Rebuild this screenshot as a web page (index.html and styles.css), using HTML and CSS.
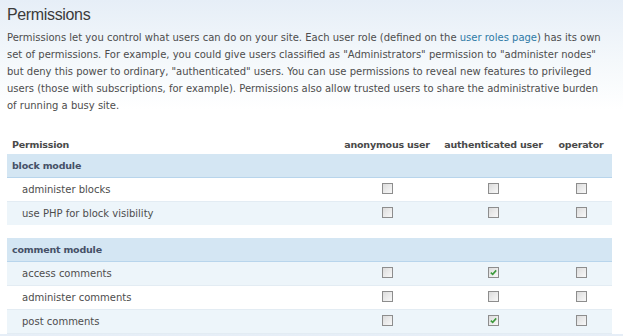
FILE: index.html
```html
<!DOCTYPE html>
<html lang="en">
<head>
  <meta charset="UTF-8" />
  <title>Permissions</title>
  <link rel="stylesheet" href="styles.css">
</head>
<body>
  <div class="page">
    <h2 class="title">Permissions</h2>
    <p class="help">Permissions let you control what users can do on your site. Each user role (defined on the <a href="#">user roles page</a>) has its own<br>
    set of permissions. For example, you could give users classified as "Administrators" permission to "administer nodes"<br>
    but deny this power to ordinary, "authenticated" users. You can use permissions to reveal new features to privileged<br>
    users (those with subscriptions, for example). Permissions also allow trusted users to share the administrative burden<br>
    of running a busy site.</p>

    <table class="perms">
      <colgroup>
        <col class="col-name">
        <col class="col-anon">
        <col class="col-auth">
        <col class="col-op">
      </colgroup>
      <thead>
        <tr>
          <th>Permission</th>
          <th class="checkbox">anonymous user</th>
          <th class="checkbox">authenticated user</th>
          <th class="checkbox">operator</th>
        </tr>
      </thead>
      <tbody>
        <tr class="first">
          <td class="module" colspan="4">block module</td>
        </tr>
        <tr class="odd">
          <td class="permission">administer blocks</td>
          <td class="checkbox"><span class="box"></span></td>
          <td class="checkbox"><span class="box"></span></td>
          <td class="checkbox"><span class="box"></span></td>
        </tr>
        <tr class="even">
          <td class="permission">use PHP for block visibility</td>
          <td class="checkbox"><span class="box"></span></td>
          <td class="checkbox"><span class="box"></span></td>
          <td class="checkbox"><span class="box"></span></td>
        </tr>
        <tr>
          <td class="module" colspan="4">comment module</td>
        </tr>
        <tr class="even">
          <td class="permission">access comments</td>
          <td class="checkbox"><span class="box"></span></td>
          <td class="checkbox"><span class="box checked"><svg viewBox="0 0 9 9" width="9" height="9"><path d="M1.8 4.6 L3.7 6.4 L7.2 2.4" /></svg></span></td>
          <td class="checkbox"><span class="box"></span></td>
        </tr>
        <tr class="odd">
          <td class="permission">administer comments</td>
          <td class="checkbox"><span class="box"></span></td>
          <td class="checkbox"><span class="box"></span></td>
          <td class="checkbox"><span class="box"></span></td>
        </tr>
        <tr class="even">
          <td class="permission">post comments</td>
          <td class="checkbox"><span class="box"></span></td>
          <td class="checkbox"><span class="box checked"><svg viewBox="0 0 9 9" width="9" height="9"><path d="M1.8 4.6 L3.7 6.4 L7.2 2.4" /></svg></span></td>
          <td class="checkbox"><span class="box"></span></td>
        </tr>
      </tbody>
    </table>
  </div>
</body>
</html>
```

FILE: styles.css
```css
html, body {
  margin: 0;
  padding: 0;
}

body {
  background: linear-gradient(180deg, #e6eef7 0px, #f4f8fb 60px, #ffffff 110px);
  color: #4d4d4d;
  font-family: "DejaVu Sans", Verdana, sans-serif;
  font-size: 10px;
}

.page {
  padding: 0 11px 0 7px;
}

.title {
  margin: 0;
  padding-top: 5px;
  height: 21px;
  font-family: "Liberation Sans", Arial, sans-serif;
  font-size: 16px;
  font-weight: normal;
  letter-spacing: -0.35px;
  line-height: 20px;
  color: #3b3b3b;
}

.help {
  margin: 3px 0 0;
  line-height: 17px;
  white-space: nowrap;
}

.help a {
  color: #2e7aa6;
  text-decoration: none;
}

.perms {
  width: 605px;
  margin-top: 20px;
  border-collapse: collapse;
  table-layout: fixed;
}

.col-name { width: 330px; }
.col-anon { width: 100px; }
.col-auth { width: 113px; }
.col-op { width: 62px; }

.perms th {
  height: 20px;
  padding: 0 5px;
  text-align: left;
  font-size: 9.5px;
  letter-spacing: -0.2px;
  font-weight: bold;
  color: #494949;
}

.perms th.checkbox,
.perms td.checkbox {
  text-align: center;
  padding: 0;
}

.perms td {
  height: 23px;
  padding: 0 5px;
  border-bottom: 1px solid #e3ecf3;
}

.perms tr.odd td {
  background: #ffffff;
}

.perms tr.even td {
  background: #edf5fa;
}

.perms td.module {
  background: #d4e6f3;
  border-top: 13px solid #ffffff;
  border-bottom: 1px solid #b8d5ec;
  font-size: 9.5px;
  letter-spacing: -0.2px;
  font-weight: bold;
  color: #455067;
}

.perms tr.first td.module {
  border-top-width: 0;
}

.perms td.permission {
  padding-left: 15px;
}

.box {
  display: inline-block;
  vertical-align: middle;
  width: 9px;
  height: 9px;
  border: 1px solid #8d8d8d;
  background: linear-gradient(135deg, #dcdcdc, #f8f8f8);
  position: relative;
  top: -1px;
}

.box svg {
  display: block;
  fill: none;
  stroke: #3c9a3c;
  stroke-width: 1.6;
}
```
